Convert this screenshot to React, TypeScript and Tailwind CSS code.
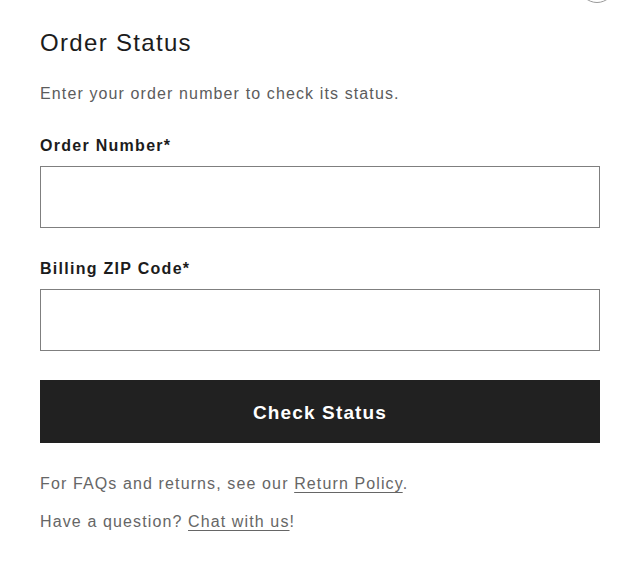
export default function App() {
  return (
    <main className="relative min-h-screen overflow-hidden bg-white font-['Liberation_Sans',Arial,sans-serif]">
      {/* close button peeking in from the top edge */}
      <div className="absolute right-[25px] top-[-33px] h-9 w-9 rounded-full border border-[#9a9a9a]" />

      <div className="px-10 pt-[27px]">
        <h1 className="text-[24px] leading-8 tracking-[0.055em] text-[#1c1c1c]">Order Status</h1>

        <p className="mt-[23px] text-[16px] leading-6 tracking-[0.07em] text-[#5c5c5c]">
          Enter your order number to check its status.
        </p>

        <form className="mt-7 flex flex-col" onSubmit={(e) => e.preventDefault()}>
          <label className="text-[16px] font-bold leading-6 tracking-[0.08em] text-[#1c1c1c]">
            Order Number*
            <input type="text" className="mt-2 block h-[62px] w-full border border-[#7f7f7f] bg-white px-3 outline-none" />
          </label>

          <label className="mt-[29px] text-[16px] font-bold leading-6 tracking-[0.08em] text-[#1c1c1c]">
            Billing ZIP Code*
            <input type="text" className="mt-2 block h-[62px] w-full border border-[#7f7f7f] bg-white px-3 outline-none" />
          </label>

          <button type="submit" className="mt-[29px] h-[63px] w-full bg-[#212121] pt-[3px] text-[19px] font-bold tracking-[0.06em] text-white">
            Check Status
          </button>
        </form>

        <p className="mt-[29px] text-[16px] leading-6 tracking-[0.07em] text-[#666666]">
          For FAQs and returns, see our{" "}
          <a href="#" className="underline decoration-1 underline-offset-[3px]">Return Policy</a>.
        </p>
        <p className="mt-[14px] text-[16px] leading-6 tracking-[0.07em] text-[#666666]">
          Have a question?{" "}
          <a href="#" className="underline decoration-1 underline-offset-[3px]">Chat with us</a>!
        </p>
      </div>
    </main>
  );
}
